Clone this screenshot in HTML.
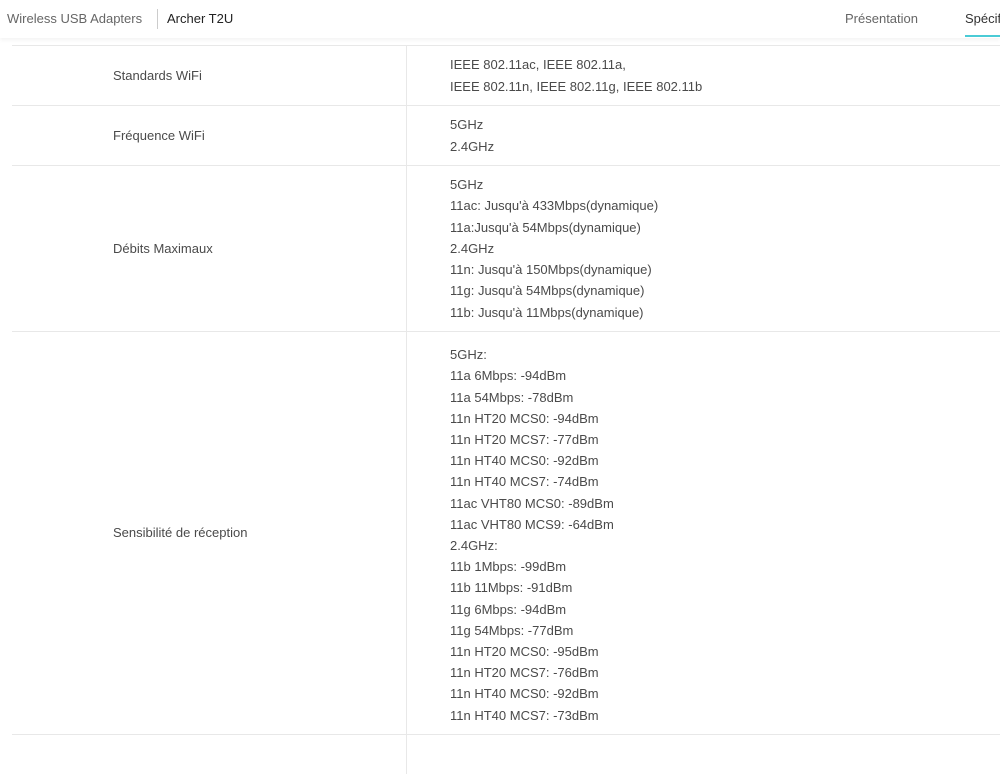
<!DOCTYPE html>
<html><head><meta charset="utf-8"><style>
*{margin:0;padding:0;box-sizing:border-box}
body{width:1000px;height:740px;overflow:hidden;background:#fff;font-family:"Liberation Sans",Arial,sans-serif;color:#4a4a4a;position:relative}
.hdr{position:absolute;left:0;top:0;width:1000px;height:38px;background:#fff;box-shadow:0 2px 4px rgba(0,0,0,0.05);z-index:2}
.hdr .a{position:absolute;left:7px;top:11px;font-size:13px;color:#666}
.hdr .sep{position:absolute;left:157px;top:9px;width:1px;height:20px;background:#ccc}
.hdr .b{position:absolute;left:167px;top:11px;font-size:13px;color:#222}
.hdr .p{position:absolute;left:845px;top:11px;font-size:13px;color:#666}
.hdr .s{position:absolute;left:965px;top:11px;font-size:13px;color:#333;white-space:nowrap}
.hdr .u{position:absolute;left:965px;top:35px;width:35px;height:2px;background:#4acbd6}
.row{position:absolute;left:12px;width:988px;border-top:1px solid #e8e8e8;font-size:13px;line-height:21.2px}
.l,.r{position:absolute;top:0;bottom:0;display:flex;align-items:center}
.l{left:0;width:395px;padding-left:101px;border-right:1px solid #e8e8e8}
.r{left:396px;right:0;padding-left:42px}
</style></head><body>
<div class="hdr"><span class="a">Wireless USB Adapters</span><span class="sep"></span><span class="b">Archer T2U</span><span class="p">Présentation</span><span class="s">Spécifications</span><span class="u"></span></div>
<div class="row" style="top:45px;height:60px"><div class="l">Standards WiFi</div><div class="r"><div>IEEE 802.11ac, IEEE 802.11a,<br>IEEE 802.11n, IEEE 802.11g, IEEE 802.11b</div></div></div>
<div class="row" style="top:105px;height:60px"><div class="l">Fréquence WiFi</div><div class="r"><div>5GHz<br>2.4GHz</div></div></div>
<div class="row" style="top:165px;height:166px"><div class="l">Débits Maximaux</div><div class="r"><div>5GHz<br>11ac: Jusqu'à 433Mbps(dynamique)<br>11a:Jusqu'à 54Mbps(dynamique)<br>2.4GHz<br>11n: Jusqu'à 150Mbps(dynamique)<br>11g: Jusqu'à 54Mbps(dynamique)<br>11b: Jusqu'à 11Mbps(dynamique)</div></div></div>
<div class="row" style="top:331px;height:403px"><div class="l">Sensibilité de réception</div><div class="r" style="padding-top:4px"><div>5GHz:<br>11a 6Mbps: -94dBm<br>11a 54Mbps: -78dBm<br>11n HT20 MCS0: -94dBm<br>11n HT20 MCS7: -77dBm<br>11n HT40 MCS0: -92dBm<br>11n HT40 MCS7: -74dBm<br>11ac VHT80 MCS0: -89dBm<br>11ac VHT80 MCS9: -64dBm<br>2.4GHz:<br>11b 1Mbps: -99dBm<br>11b 11Mbps: -91dBm<br>11g 6Mbps: -94dBm<br>11g 54Mbps: -77dBm<br>11n HT20 MCS0: -95dBm<br>11n HT20 MCS7: -76dBm<br>11n HT40 MCS0: -92dBm<br>11n HT40 MCS7: -73dBm</div></div></div>
<div class="row" style="top:734px;height:40px"><div class="l"></div><div class="r"></div></div>
</body></html>
